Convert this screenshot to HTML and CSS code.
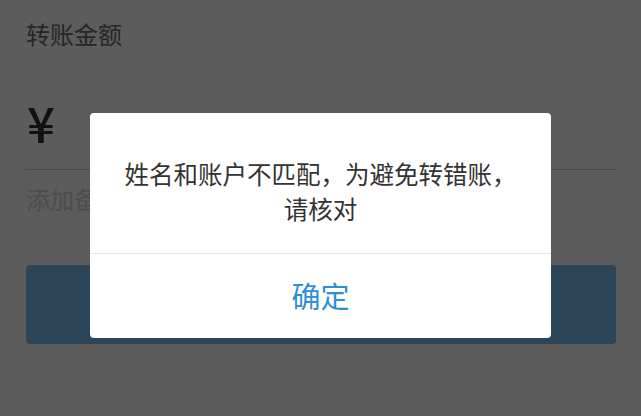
FILE: index.html
```html
<!DOCTYPE html>
<html lang="zh-CN">
<head>
<meta charset="utf-8">
<title>转账</title>
<link rel="stylesheet" href="styles.css">
</head>
<body>
<div class="page">
  <div class="label">转账金额</div>
  <div class="amount-row">
    <span class="currency">¥</span>
  </div>
  <div class="note">添加备注</div>
  <div class="submit"></div>
</div>
<div class="mask"></div>
<div class="dialog">
  <div class="dialog-body">姓名和账户不匹配，为避免转错账，<br>请核对</div>
  <div class="dialog-footer">确定</div>
</div>
</body>
</html>
```
FILE: styles.css
```css
html, body {
  margin: 0;
  padding: 0;
}
body {
  width: 641px;
  height: 416px;
  overflow: hidden;
  position: relative;
  background: #ffffff;
  font-family: "Noto Sans CJK SC", "Noto Sans", sans-serif;
}
.page {
  padding: 17px 25px 0 25px;
  display: flex;
  flex-direction: column;
}
.label {
  font-size: 24px;
  line-height: 34px;
  color: #6a6a6a;
  padding-left: 1px;
}
.amount-row {
  margin-top: 38px;
  height: 80px;
  display: flex;
  align-items: flex-start;
  border-bottom: 1px solid #d0d0d0;
  padding-left: 2px;
}
.currency {
  font-size: 49px;
  line-height: 60px;
  font-weight: 500;
  color: #303030;
  position: relative;
  top: 3px;
}
.note {
  margin-top: 12px;
  font-size: 24px;
  line-height: 34px;
  color: #d4d4d4;
  padding-left: 1px;
}
.submit {
  margin-top: 49px;
  margin-left: 1px;
  height: 79px;
  border-radius: 4px;
  background: #7ac0f4;
}
.mask {
  position: absolute;
  left: 0;
  top: 0;
  right: 0;
  bottom: 0;
  background: rgba(0, 0, 0, 0.64);
}
.dialog {
  position: absolute;
  left: 90px;
  top: 113px;
  width: 461px;
  height: 225px;
  background: #ffffff;
  border-radius: 4px;
  display: flex;
  flex-direction: column;
}
.dialog-body {
  padding: 43px 20px 0 20px;
  height: 97px;
  font-size: 24.5px;
  line-height: 35px;
  color: #333333;
  text-align: center;
  border-bottom: 1px solid #e6e6e6;
}
.dialog-footer {
  flex: 1;
  display: flex;
  align-items: center;
  justify-content: center;
  font-size: 29px;
  color: #2d8fd5;
  padding-bottom: 3px;
}
```
